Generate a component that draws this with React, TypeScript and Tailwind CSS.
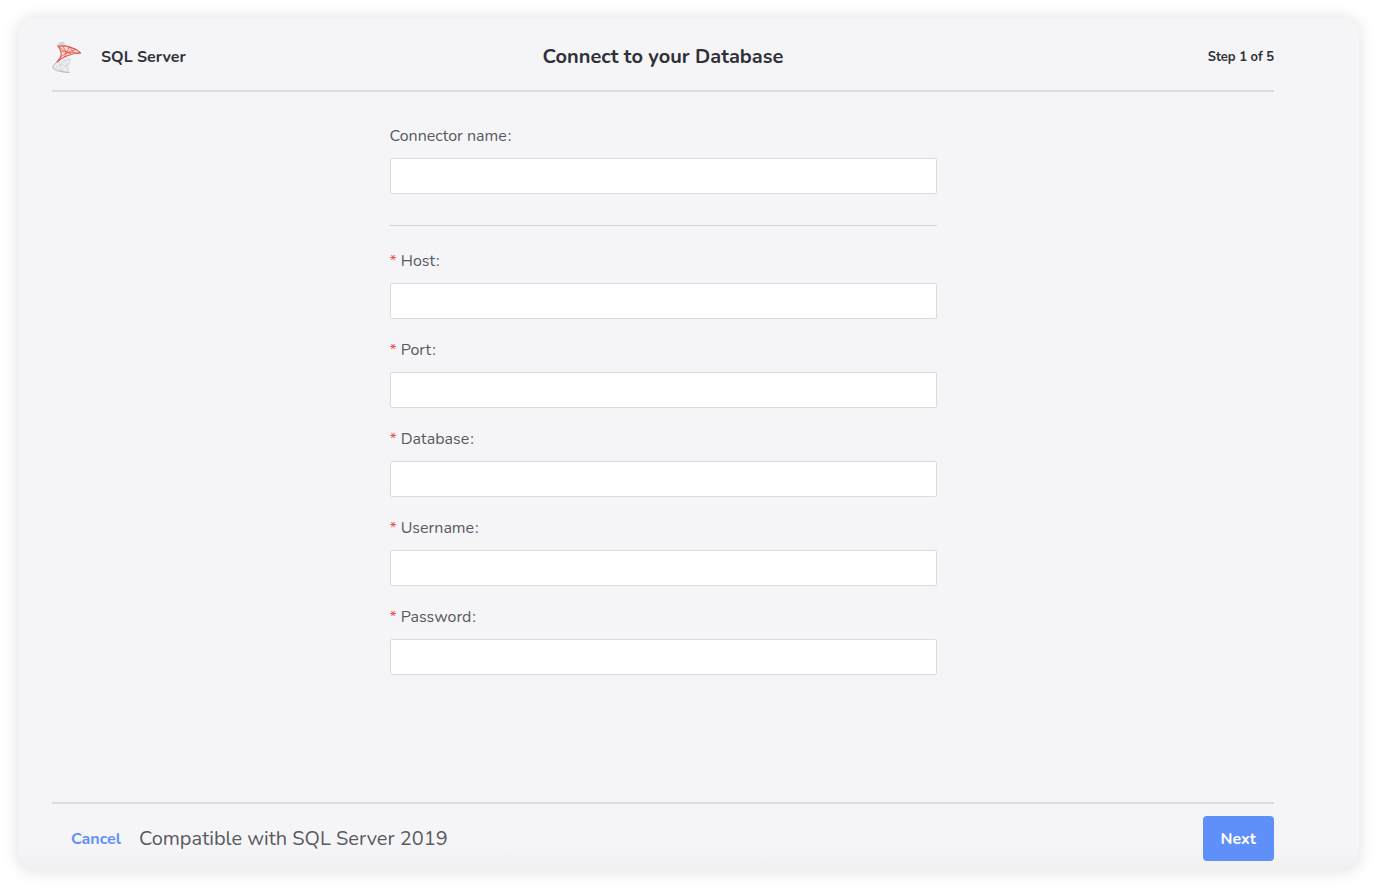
import React from 'react';

type Field = {
    id: string;
    label: string;
    type?: string;
    required?: boolean;
};

const connectionFields: Field[] = [
    { id: 'host', label: 'Host', required: true },
    { id: 'port', label: 'Port', required: true },
    { id: 'database', label: 'Database', required: true },
    { id: 'username', label: 'Username', required: true },
    { id: 'password', label: 'Password', type: 'password', required: true },
];

const SqlServerLogo: React.FC = () => (
    <svg width="30" height="32" viewBox="0 0 30 32" fill="none" strokeLinecap="round" strokeLinejoin="round" aria-hidden="true">
        <g stroke="#c6cbd1" strokeWidth="0.6">
            <path d="M5 4.500 7.500 2 11.500 1 13.500 4.500 9 5 5 4.500Z" fill="#d9dde0" />
            <path d="M7.500 2 9 5 11.500 1" />
            <path d="M6 20C3 22 .5 24.500.8 27 3 30 9 31.300 17 31.500 15.500 28.500 16.500 24 18.500 18.500 L14 15.500Z" fill="#edeff1" stroke="#d6dadd" />
            <path d="M6 20 8 23.500 13 19 14.500 25 8 23.500 3.500 26.500M9 29.500 14.500 25 18.500 18.500M8 23.500 9 29.500 3.500 26.500M14.500 25 17 31.500 9 29.500M13 19 18.500 18.500" />
            <path d="M6 20.500C3 22.500.8 24.500.9 27 4 30 10 31 17 31.500" stroke="#b0b6be" strokeWidth="0.9" />
        </g>
        <g stroke="#e0584e" strokeWidth="0.8">
            <path d="M6 5.200C14 4 23 6.500 28.500 12 20 12.500 12 14.500 5 21 9 17 11.500 12.500 6 5.200Z" fill="#f8dfdd" strokeWidth="1.1" />
            <path d="M6 5.200 15 11.500 28.500 12M9.300 10 15 11.500 17 6 22 12M15 11.500 11 5.500M17 6 24 8.500 15 11.500 12.500 15.500M9 15.500 15 11.500 19 13" />
        </g>
    </svg>
);

const FormField: React.FC<Field> = ({ id, label, type = 'text', required }) => (
    <div className="flex flex-col gap-2.5">
        <label htmlFor={id} className="flex text-base leading-6 text-[#585962]">
            {required && <span className="mr-1 text-base leading-6 text-[#f0524f]">*</span>}
            {label}
            <span className="ml-px">:</span>
        </label>
        <input
            id={id}
            name={id}
            type={type}
            required={required}
            className="h-9 w-full rounded-xs border border-[#dadbdf] bg-white px-3 text-base text-[#585962] outline-none focus:border-[#5f8ff8]"
        />
    </div>
);

export const App: React.FC = () => {
    return (
        <div className="flex min-h-screen bg-white pt-[18px] pr-[19px] pb-[19px] pl-[18px] font-['Nunito','Lato','Open_Sans',sans-serif] text-[#303138]">
            <main className="flex flex-1 flex-col rounded-2xl bg-[#f5f5f7] bg-[linear-gradient(to_top,#f0f0f2,#f5f5f7_24px)] pr-[85px] pl-[34px] shadow-[0_0_16px_rgba(0,0,0,0.13)]">
                <header className="grid h-[74px] grid-cols-3 items-center border-b-2 border-[#dadbde] pt-1.5">
                    <div className="flex items-center gap-[19px] text-base font-bold">
                        <SqlServerLogo />
                        <span>SQL Server</span>
                    </div>
                    <h1 className="text-center text-xl font-bold whitespace-nowrap">Connect to your Database</h1>
                    <p className="text-right text-[13px] leading-5 font-bold">Step 1 of 5</p>
                </header>

                <form id="connection" className="mx-auto w-full max-w-[547px] flex-1 pt-8 pb-8" onSubmit={(e) => e.preventDefault()}>
                    <FormField id="connectorName" label="Connector name" />
                    <hr className="mt-[31px] mb-[23px] border-[#d0d1d5]" />
                    <div className="flex flex-col gap-[19px]">
                        {connectionFields.map((field) => (
                            <FormField key={field.id} {...field} />
                        ))}
                    </div>
                </form>

                <footer className="flex items-center border-t-2 border-[#dadbde] pt-3 pb-2.5">
                    <button type="button" className="pr-[18px] pl-[19px] text-base font-bold text-[#5f8ff8]">Cancel</button>
                    <p className="text-xl text-[#585962]">Compatible with SQL Server 2019</p>
                    <button type="submit" form="connection" className="ml-auto h-[45px] rounded bg-[#5f8ff8] px-[18px] text-base font-bold text-white">
                        Next
                    </button>
                </footer>
            </main>
        </div>
    );
};

export default App;
